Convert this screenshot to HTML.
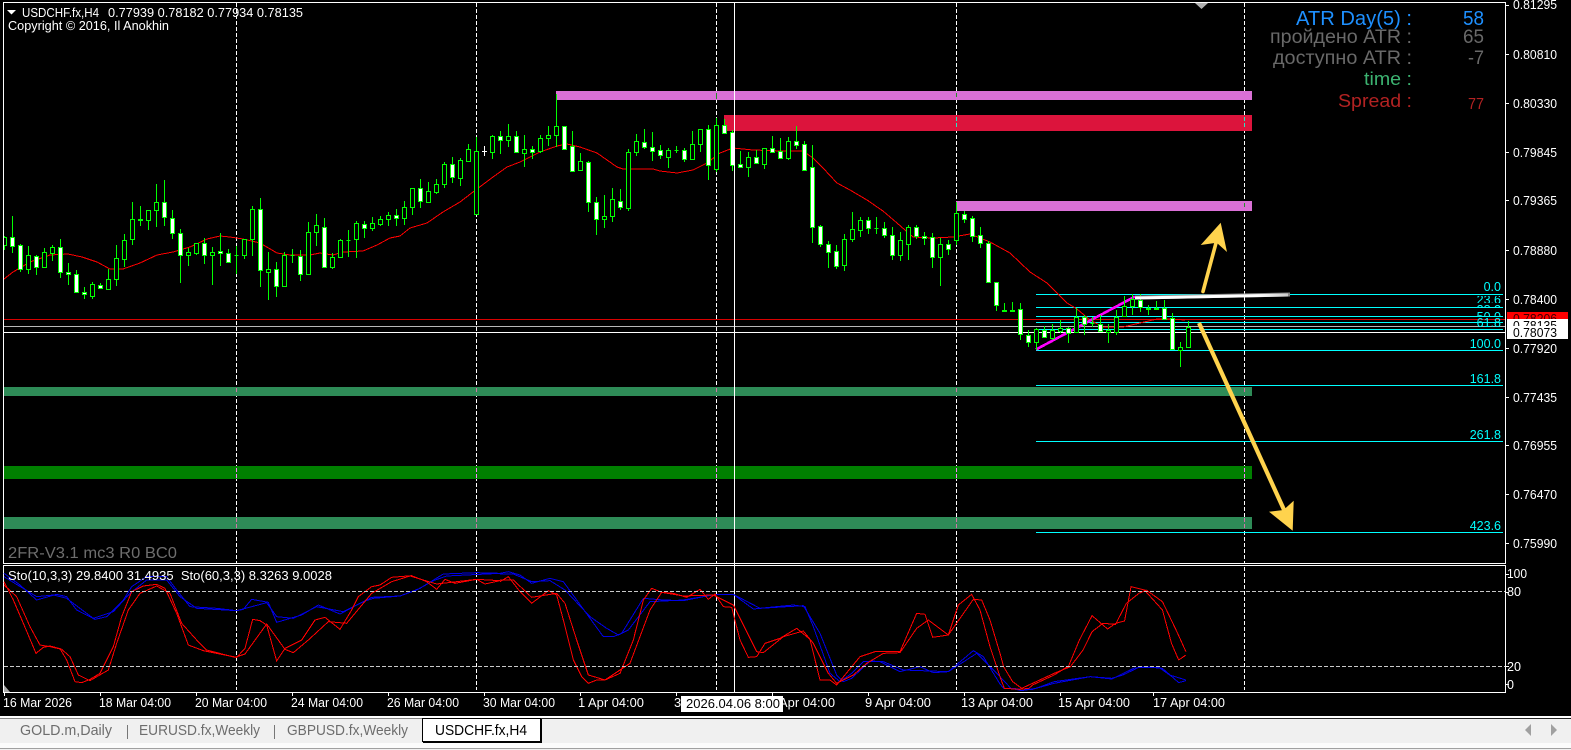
<!DOCTYPE html>
<html><head><meta charset="utf-8"><title>USDCHF.fx,H4</title>
<style>
html,body{margin:0;padding:0;background:#000;width:1571px;height:750px;overflow:hidden}
svg{display:block}
text{font-family:"Liberation Sans",sans-serif;font-size:12.5px;fill:#fff;white-space:pre}
.c{shape-rendering:crispEdges}
.s{fill:none;stroke-width:1;vector-effect:non-scaling-stroke;shape-rendering:crispEdges}
</style></head><body>
<svg width="1571" height="750" viewBox="0 0 1571 750" xmlns="http://www.w3.org/2000/svg">
<defs>
<clipPath id="cl"><rect x="4" y="3" width="1501" height="560"/></clipPath>
<clipPath id="c1"><rect x="1470" y="296" width="35" height="7"/></clipPath>
<clipPath id="c2"><rect x="1470" y="304" width="35" height="4"/></clipPath>
<clipPath id="c3"><rect x="1470" y="311" width="35" height="5"/></clipPath>
<clipPath id="c4"><rect x="1507" y="312" width="61" height="7"/></clipPath>
<clipPath id="c5"><rect x="1507" y="319" width="61" height="7"/></clipPath>
<linearGradient id="wl" x1="0" x2="1" y1="0" y2="0"><stop offset="0" stop-color="#fff"/><stop offset=".8" stop-color="#fff"/><stop offset="1" stop-color="#ccc"/></linearGradient>
</defs>
<rect width="1571" height="750" fill="#000"/>

<!-- grid verticals -->
<g class="c" stroke="#fff" stroke-dasharray="4 2" fill="none">
<path d="M236.5 3V563M476.5 3V563M716.5 3V563M956.5 3V563M1244.5 3V563"/>
<path d="M236.5 567V690M476.5 567V690M716.5 567V690M956.5 567V690M1244.5 567V690"/>
</g>
<!-- rectangles -->
<g class="c">
<rect x="556" y="91" width="696" height="9" fill="#da70d6"/>
<rect x="724" y="115" width="528" height="16" fill="#dc143c"/>
<rect x="956" y="201" width="296" height="10" fill="#da70d6"/>
<rect x="4" y="387" width="1248" height="9" fill="#2e8b57"/>
<rect x="4" y="466" width="1248" height="13" fill="#008000"/>
<rect x="4" y="517" width="1248" height="12" fill="#2e8b57"/>
</g>
<g class="c" fill="none">
<path stroke="#258f29" d="M716.5 93V99M956.5 93V97M1244.5 203V207"/>
<path stroke="#23ebc3" d="M956.5 117V121M956.5 123V127M1244.5 117V121M1244.5 123V127"/>
<path stroke="#d174a8" d="M236.5 388V392M476.5 388V392M716.5 388V392M956.5 388V392M1244.5 388V392M236.5 518V522M476.5 518V522M716.5 518V522M956.5 518V522M1244.5 518V522M236.5 524V528M476.5 524V528M716.5 524V528M956.5 524V528M1244.5 524V528"/>
<path stroke="#ff7fff" d="M236.5 468V472M476.5 468V472M716.5 468V472M956.5 468V472M1244.5 468V472M236.5 474V478M476.5 474V478M716.5 474V478M956.5 474V478M1244.5 474V478"/>
</g>

<!-- horizontal lines -->
<g class="c" fill="none">
<path stroke="#ff0000" d="M4 319.5H1505" stroke-opacity=".85"/>
<path stroke="#b8b8b8" d="M4 326.5H1505"/>
<path stroke="#fff" d="M4 332.5H1505"/>
<path stroke="#00ffff" d="M1036 294.5H1503M1036 307.5H1503M1036 316.5H1503M1036 322.5H1503M1036 329.5H1503M1036 350.5H1503M1036 385.5H1503M1036 441.5H1503M1036 532.5H1503"/>
</g>

<!-- MA -->
<polyline class="s" stroke="#f00" clip-path="url(#cl)" points="4,279 13,272 30,262 50,255 68,254 82,257 97,262 110,269 123,269 140,263 157,255 173,252 190,247 207,239 220,236 230,237 243,239 260,243 277,253 290,255 310,255 320,253 333,255 343,252 363,251 377,245 390,238 400,236 410,228 427,223 443,212 460,202 473,192 493,177 507,167 520,162 540,152 557,146 567,144 580,147 597,153 617,167 623,169 653,169 660,171 677,173 693,170 707,163 720,153 733,148 753,150 783,151 803,151 813,158 823,168 837,183 850,190 867,200 883,211 897,223 913,237 933,238 953,237 970,234 990,242 1010,253 1030,272 1047,283 1067,303 1077,309 1090,320 1103,327 1123,327 1140,323 1157,319 1170,319 1185,320"/>

<!-- magenta trend -->
<path d="M1036 349.5L1135 296.5" stroke="#ff00ff" stroke-width="2.6" fill="none" class="c"/>

<!-- candles -->
<g clip-path="url(#cl)" class="c">
<path stroke="#00ff00" fill="none" d="M4.5 236V250M12.5 216V253M20.5 244V272M28.5 246V274M36.5 255V275M44.5 248V268M52.5 245V261M60.5 239V278M68.5 263V285M76.5 270V293M84.5 287V299M92.5 282V299M100.5 283V289M108.5 269V289M116.5 245V286M124.5 234V267M132.5 202V245M140.5 206V226M148.5 210V230M156.5 184V227M164.5 180V226M172.5 210V239M180.5 229V283M188.5 248V266M196.5 243V255M204.5 238V264M212.5 247V285M220.5 233V266M228.5 249V263M236.5 246V274M244.5 239V259M252.5 206V256M260.5 198V287M268.5 252V300M276.5 262V297M284.5 252V286M292.5 249V263M300.5 250V281M308.5 222V274M316.5 214V246M324.5 218V268M332.5 253V269M340.5 239V258M348.5 230V257M356.5 221V258M364.5 221V238M372.5 217V231M380.5 216V226M388.5 212V226M396.5 209V226M404.5 201V225M412.5 188V215M420.5 179V208M428.5 182V203M436.5 179V194M444.5 162V188M452.5 157V183M460.5 158V186M468.5 144V162M476.5 137V214M492.5 135V159M500.5 131V154M508.5 124V147M516.5 131V152M524.5 135V167M532.5 146V159M540.5 135V153M548.5 126V146M556.5 94V147M564.5 126V149M572.5 131V171M580.5 153V171M588.5 161V212M596.5 197V235M604.5 195V228M612.5 188V222M620.5 189V210M628.5 149V211M636.5 134V156M644.5 129V149M652.5 132V161M660.5 145V159M668.5 148V168M676.5 146V153M684.5 148V162M692.5 131V160M700.5 129V152M708.5 125V180M716.5 118V172M724.5 119V134M732.5 130V171M740.5 151V168M748.5 152V177M756.5 150V164M764.5 148V169M772.5 136V153M780.5 138V158M788.5 137V160M796.5 126V149M804.5 141V170M812.5 145V243M820.5 225V247M828.5 241V268M836.5 245V269M844.5 234V271M852.5 212V242M860.5 217V237M868.5 217V234M876.5 217V234M884.5 222V238M892.5 227V260M900.5 232V261M908.5 225V260M916.5 225V239M924.5 232V245M932.5 233V268M940.5 238V286M948.5 240V255M956.5 202V245M964.5 211V223M972.5 216V242M980.5 227V248M988.5 241V283M996.5 282V311M1004.5 303V311M1012.5 302V312M1020.5 303V340M1028.5 330V347M1036.5 328V350M1044.5 326V337M1052.5 324V340M1060.5 320V333M1068.5 327V343M1076.5 308V333M1084.5 315V335M1092.5 317V327M1100.5 315V331M1108.5 324V343M1116.5 310V335M1124.5 296V317M1132.5 294V315M1140.5 294V312M1148.5 305V315M1156.5 301V309M1164.5 300V319M1172.5 313V350M1180.5 342V367M1188.5 321V348"/>
<path stroke="#00ff00" fill="#000" d="M2.5 237.5h4v8h-4zM26.5 255.5h4v14h-4zM42.5 252.5h4v15h-4zM50.5 247.5h4v6h-4zM90.5 284.5h4v12h-4zM106.5 279.5h4v10h-4zM114.5 258.5h4v21h-4zM122.5 240.5h4v19h-4zM130.5 219.5h4v20h-4zM146.5 210.5h4v10h-4zM154.5 202.5h4v8h-4zM186.5 252.5h4v3h-4zM194.5 243.5h4v10h-4zM210.5 252.5h4v3h-4zM242.5 239.5h4v16h-4zM250.5 209.5h4v30h-4zM266.5 269.5h4v3h-4zM282.5 255.5h4v31h-4zM306.5 232.5h4v42h-4zM314.5 225.5h4v7h-4zM330.5 257.5h4v10h-4zM338.5 240.5h4v17h-4zM354.5 223.5h4v16h-4zM370.5 223.5h4v5h-4zM378.5 219.5h4v5h-4zM386.5 215.5h4v4h-4zM402.5 207.5h4v11h-4zM410.5 188.5h4v19h-4zM426.5 191.5h4v11h-4zM434.5 184.5h4v8h-4zM442.5 164.5h4v20h-4zM458.5 160.5h4v18h-4zM466.5 149.5h4v12h-4zM474.5 151.5h4v63h-4zM490.5 136.5h4v16h-4zM506.5 136.5h4v4h-4zM522.5 149.5h4v4h-4zM538.5 138.5h4v13h-4zM546.5 135.5h4v3h-4zM554.5 126.5h4v9h-4zM578.5 161.5h4v9h-4zM602.5 216.5h4v3h-4zM610.5 199.5h4v17h-4zM626.5 152.5h4v56h-4zM634.5 141.5h4v11h-4zM666.5 150.5h4v7h-4zM690.5 144.5h4v15h-4zM698.5 129.5h4v15h-4zM714.5 125.5h4v44h-4zM746.5 157.5h4v10h-4zM762.5 148.5h4v16h-4zM786.5 141.5h4v17h-4zM842.5 239.5h4v26h-4zM850.5 229.5h4v10h-4zM858.5 220.5h4v10h-4zM898.5 240.5h4v15h-4zM906.5 227.5h4v17h-4zM938.5 244.5h4v13h-4zM954.5 213.5h4v27h-4zM1034.5 329.5h4v13h-4zM1050.5 330.5h4v8h-4zM1058.5 328.5h4v3h-4zM1074.5 317.5h4v15h-4zM1106.5 330.5h4v2h-4zM1114.5 317.5h4v15h-4zM1122.5 306.5h4v10h-4zM1130.5 299.5h4v7h-4zM1178.5 347.5h4v3h-4zM1186.5 327.5h4v20h-4z"/>
<path stroke="#00ff00" fill="#fff" d="M10.5 237.5h4v9h-4zM18.5 245.5h4v24h-4zM34.5 256.5h4v11h-4zM58.5 247.5h4v25h-4zM66.5 272.5h4v2h-4zM74.5 274.5h4v18h-4zM82.5 292.5h4v2h-4zM98.5 285.5h4v3h-4zM162.5 202.5h4v15h-4zM170.5 218.5h4v15h-4zM178.5 233.5h4v22h-4zM202.5 243.5h4v12h-4zM218.5 251.5h4v2h-4zM226.5 253.5h4v9h-4zM258.5 209.5h4v61h-4zM274.5 269.5h4v17h-4zM298.5 256.5h4v18h-4zM322.5 227.5h4v40h-4zM362.5 224.5h4v4h-4zM394.5 215.5h4v3h-4zM418.5 188.5h4v13h-4zM450.5 164.5h4v13h-4zM498.5 136.5h4v4h-4zM514.5 136.5h4v16h-4zM530.5 149.5h4v3h-4zM562.5 126.5h4v23h-4zM570.5 146.5h4v25h-4zM586.5 162.5h4v40h-4zM594.5 202.5h4v17h-4zM618.5 201.5h4v6h-4zM642.5 142.5h4v5h-4zM650.5 147.5h4v4h-4zM658.5 150.5h4v5h-4zM682.5 150.5h4v9h-4zM706.5 129.5h4v36h-4zM722.5 125.5h4v8h-4zM730.5 132.5h4v33h-4zM738.5 164.5h4v3h-4zM754.5 157.5h4v6h-4zM770.5 148.5h4v4h-4zM778.5 151.5h4v7h-4zM794.5 141.5h4v4h-4zM802.5 144.5h4v26h-4zM810.5 167.5h4v60h-4zM818.5 226.5h4v18h-4zM826.5 244.5h4v8h-4zM834.5 251.5h4v15h-4zM866.5 220.5h4v8h-4zM882.5 228.5h4v7h-4zM890.5 235.5h4v20h-4zM914.5 227.5h4v9h-4zM922.5 236.5h4v2h-4zM930.5 237.5h4v20h-4zM946.5 244.5h4v5h-4zM962.5 214.5h4v5h-4zM970.5 218.5h4v18h-4zM978.5 235.5h4v8h-4zM986.5 243.5h4v39h-4zM994.5 282.5h4v23h-4zM1018.5 309.5h4v25h-4zM1026.5 335.5h4v7h-4zM1042.5 330.5h4v7h-4zM1066.5 328.5h4v5h-4zM1082.5 317.5h4v7h-4zM1098.5 324.5h4v7h-4zM1138.5 300.5h4v7h-4zM1162.5 308.5h4v11h-4zM1170.5 318.5h4v31h-4z"/>
<path stroke="#00ff00" fill="none" d="M138.5 219.5h4v1h-4zM234.5 255.5h4M290.5 255.5h4M346.5 240.5h4M674.5 150.5h4M874.5 228.5h4M1002.5 310.5h4v1h-4zM1010.5 310.5h4v1h-4zM1090.5 323.5h4M1146.5 308.5h4v1h-4zM1154.5 308.5h4v1h-4z"/>
<path stroke="#fff" fill="none" d="M484.5 146V156M482 151.5h5"/>
</g>

<!-- crosshair -->
<path class="c" stroke="#fff" d="M734.5 3V692" fill="none"/>

<!-- white trend line -->
<path d="M1135 297.5L1290 294.5" stroke="#8a8a8a" stroke-width="4" fill="none"/>
<path d="M1135 298L1288 295" stroke="url(#wl)" stroke-width="3" fill="none"/>

<!-- arrows -->
<g fill="#ffd34d" stroke="#ffd34d">
<path d="M1203 291.5L1216 243" stroke-width="3.6" fill="none" stroke-linecap="round"/>
<path stroke="none" d="M1220.7 222.7L1200.7 245L1216.7 242.7L1227 252Z"/>
<path d="M1199 323L1285 512" stroke-width="4.2" fill="none"/>
<path stroke="none" d="M1292.7 530.7L1269 511.7L1283.5 510L1293.7 500.7Z"/>
</g>

<!-- frame -->
<g class="c" fill="none" stroke="#fff">
<path d="M3.5 2.5H1505.5V563.5H3.5Z"/>
<path d="M3.5 565.5H1505.5V692.5H3.5Z"/>
</g>
<path d="M1195 3H1208L1201.5 9Z" fill="#b0b0b0"/>
<path d="M4 685V692H10Z" fill="#a8a8a8"/>
<path d="M7 10H16L11.5 14.5Z" fill="#fff"/>

<!-- Stochastics -->
<g>
<g transform="translate(0,560) scale(.33333)">
<polyline class="s" stroke="#0000e6" points="12,40 60,75 110,120 170,103 200,110 230,150 285,178 320,170 370,120 395,80 440,50 500,50 530,90 570,140 650,145 710,152 730,148 755,118 805,127 830,187 905,165 955,135 1020,162 1080,130 1115,112 1200,108 1260,85 1330,42 1430,38 1500,40"/>
<polyline class="s" stroke="#0000e6" points="12,50 110,110 160,105 200,115 280,175 340,155 390,100 440,60 500,60 540,110 590,145 710,152 800,128 830,170 880,175 950,140 1030,155 1090,125 1120,115 1200,108 1250,90 1300,62 1340,48 1500,40"/>
<polyline class="s" stroke="#f00" points="12,65 40,120 70,190 108,280 130,262 150,258 180,266 200,300 225,365 245,368 270,358 300,340 340,260 365,170 395,95 430,78 470,73 495,85 530,160 565,255 610,272 650,280 710,292 735,265 758,178 780,182 800,195 830,303 855,265 905,240 945,180 975,172 1020,208 1055,150 1075,110 1115,80 1140,75 1175,52 1235,47 1280,65 1310,88 1335,58 1365,70 1430,58 1455,72 1500,62"/>
<polyline class="s" stroke="#f00" points="12,75 50,110 90,200 120,255 150,260 185,268 210,290 235,345 270,362 325,330 350,250 385,150 420,100 470,78 510,100 545,190 590,240 620,270 705,292 735,282 800,192 855,268 880,278 925,240 985,185 1040,190 1115,100 1175,65 1230,48 1310,72 1430,58 1500,62"/>
</g>
<g transform="translate(500,560) scale(.33333)">
<polyline class="s" stroke="#0000e6" points="0,40 25,35 60,45 95,70 150,55 190,65 230,120 310,230 340,230 365,220 430,115 490,120 550,122 610,110 650,103 700,103 760,147 880,135 915,140 940,200 990,340 1020,365 1055,340 1090,305 1140,305 1200,335 1260,320 1300,338 1345,335 1420,272 1450,290 1500,372"/>
<polyline class="s" stroke="#0000e6" points="0,42 40,42 95,65 150,62 195,90 270,170 320,205 355,225 385,210 450,125 550,120 650,103 700,103 780,145 910,137 960,220 1010,345 1030,365 1055,355 1110,303 1150,305 1210,330 1345,335 1430,280 1460,310 1500,350"/>
<polyline class="s" stroke="#f00" points="0,65 25,50 60,95 95,130 145,92 170,105 190,180 220,300 245,350 265,370 290,360 315,360 360,340 400,240 430,120 455,85 485,97 520,100 560,112 600,88 625,118 645,102 670,140 695,142 720,240 745,292 770,290 795,250 840,235 890,205 930,238 960,360 990,360 1010,375 1080,290 1125,275 1200,275 1250,160 1275,163 1298,232 1345,225 1375,135 1415,103 1440,150 1470,260 1500,350"/>
<polyline class="s" stroke="#f00" points="0,60 40,60 95,112 170,100 195,130 230,240 265,345 315,360 390,310 450,150 485,97 550,108 640,105 700,135 770,275 790,278 850,230 910,213 940,250 985,340 1010,370 1060,345 1100,310 1150,280 1200,278 1250,205 1285,180 1345,225 1420,118 1445,120 1470,180 1500,280"/>
</g>
<g transform="translate(1000,560) scale(.361,.33333)">
<polyline class="s" stroke="#0000e6" points="0,372 10,385 90,388 150,370 200,360 250,350 310,357 370,325 400,320 450,325 495,368 515,362"/>
<polyline class="s" stroke="#0000e6" points="0,350 30,385 60,392 100,385 150,365 250,350 310,355 340,345 385,322 440,322 470,345 515,360"/>
<polyline class="s" stroke="#f00" points="0,350 12,385 55,388 80,385 90,375 150,345 190,318 220,240 255,167 298,207 320,190 345,183 363,80 400,90 450,150 475,250 495,300 515,285"/>
<polyline class="s" stroke="#f00" points="0,280 10,320 35,365 60,385 100,365 150,340 195,320 230,270 255,215 285,190 320,193 350,130 385,100 405,90 450,125 490,215 515,275"/>
</g>
</g>
<path class="c" fill="none" stroke="#c8c8c8" stroke-dasharray="4 2" d="M4 591.5H1505M4 666.5H1505"/>

<!-- header text -->
<text x="22" y="17" textLength="77" lengthAdjust="spacingAndGlyphs">USDCHF.fx,H4</text>
<text x="108" y="17" textLength="195" lengthAdjust="spacingAndGlyphs">0.77939 0.78182 0.77934 0.78135</text>
<text x="8" y="30" textLength="161" lengthAdjust="spacingAndGlyphs">Copyright © 2016, Il Anokhin</text>
<text x="8" y="558" textLength="169" lengthAdjust="spacingAndGlyphs" style="font-size:16px;fill:#6e6e6e">2FR-V3.1 mc3 R0 BC0</text>
<text x="8" y="580" textLength="324" lengthAdjust="spacingAndGlyphs">Sto(10,3,3) 29.8400 31.4935  Sto(60,3,3) 8.3263 9.0028</text>

<!-- ATR panel -->
<g>
<text x="1296" y="25" textLength="116" lengthAdjust="spacingAndGlyphs" style="font-size:20px;fill:#1e90ff">ATR Day(5) :</text>
<text x="1463" y="25" textLength="21" lengthAdjust="spacingAndGlyphs" style="font-size:20px;fill:#1e90ff">58</text>
<text x="1270" y="43" textLength="142" lengthAdjust="spacingAndGlyphs" style="font-size:19px;fill:#696969">пройдено ATR :</text>
<text x="1463" y="43" textLength="21" lengthAdjust="spacingAndGlyphs" style="font-size:19px;fill:#696969">65</text>
<text x="1273" y="64" textLength="139" lengthAdjust="spacingAndGlyphs" style="font-size:19px;fill:#696969">доступно ATR :</text>
<text x="1468" y="64" textLength="16" lengthAdjust="spacingAndGlyphs" style="font-size:19px;fill:#696969">-7</text>
<text x="1364" y="85" textLength="48" lengthAdjust="spacingAndGlyphs" style="font-size:18px;fill:#3cb371">time :</text>
<text x="1338" y="107" textLength="74" lengthAdjust="spacingAndGlyphs" style="font-size:18px;fill:#b22222">Spread :</text>
<text x="1468" y="109" textLength="16" lengthAdjust="spacingAndGlyphs" style="font-size:16px;fill:#b22222">77</text>
</g>

<!-- fib labels -->
<g text-anchor="end">
<text x="1501" y="291" style="fill:#00ffff">0.0</text>
<text x="1501" y="304" clip-path="url(#c1)" style="fill:#00ffff">23.6</text>
<text x="1501" y="314" clip-path="url(#c2)" style="fill:#00ffff">38.2</text>
<text x="1501" y="321" clip-path="url(#c3)" style="fill:#00ffff">50.0</text>
<text x="1501" y="327" style="fill:#00ffff">61.8</text>
<text x="1501" y="348" style="fill:#00ffff">100.0</text>
<text x="1501" y="383" style="fill:#00ffff">161.8</text>
<text x="1501" y="439" style="fill:#00ffff">261.8</text>
<text x="1501" y="530" style="fill:#00ffff">423.6</text>
</g>

<!-- price axis -->
<path class="c" stroke="#fff" fill="none" d="M1505 5.5h4M1505 54.5h4M1505 103.5h4M1505 152.5h4M1505 200.5h4M1505 250.5h4M1505 299.5h4M1505 348.5h4M1505 397.5h4M1505 445.5h4M1505 494.5h4M1505 543.5h4M1505 574.5h4M1505 592.5h4M1505 666.5h4M1505 684.5h4"/>
<g>
<text x="1513" y="9" textLength="44" lengthAdjust="spacingAndGlyphs">0.81295</text>
<text x="1513" y="59" textLength="44" lengthAdjust="spacingAndGlyphs">0.80810</text>
<text x="1513" y="108" textLength="44" lengthAdjust="spacingAndGlyphs">0.80330</text>
<text x="1513" y="157" textLength="44" lengthAdjust="spacingAndGlyphs">0.79845</text>
<text x="1513" y="205" textLength="44" lengthAdjust="spacingAndGlyphs">0.79365</text>
<text x="1513" y="255" textLength="44" lengthAdjust="spacingAndGlyphs">0.78880</text>
<text x="1513" y="304" textLength="44" lengthAdjust="spacingAndGlyphs">0.78400</text>
<text x="1513" y="353" textLength="44" lengthAdjust="spacingAndGlyphs">0.77920</text>
<text x="1513" y="402" textLength="44" lengthAdjust="spacingAndGlyphs">0.77435</text>
<text x="1513" y="450" textLength="44" lengthAdjust="spacingAndGlyphs">0.76955</text>
<text x="1513" y="499" textLength="44" lengthAdjust="spacingAndGlyphs">0.76470</text>
<text x="1513" y="548" textLength="44" lengthAdjust="spacingAndGlyphs">0.75990</text>
<text x="1507" y="578" textLength="20" lengthAdjust="spacingAndGlyphs">100</text>
<text x="1507" y="596" textLength="14" lengthAdjust="spacingAndGlyphs">80</text>
<text x="1507" y="671" textLength="14" lengthAdjust="spacingAndGlyphs">20</text>
<text x="1507" y="689">0</text>
</g>
<rect x="1507" y="312" width="61" height="7" fill="#ff0000" class="c"/>
<text x="1513" y="323" textLength="44" lengthAdjust="spacingAndGlyphs" clip-path="url(#c4)" style="fill:#3a0000">0.78206</text>
<rect x="1507" y="319" width="61" height="20" fill="#fff" class="c"/>
<text x="1513" y="330" textLength="44" lengthAdjust="spacingAndGlyphs" clip-path="url(#c5)" style="fill:#000">0.78135</text>
<text x="1513" y="337" textLength="44" lengthAdjust="spacingAndGlyphs" style="fill:#000">0.78073</text>

<!-- time axis -->
<path class="c" stroke="#fff" fill="none" d="M4.5 692V696M100.5 692V696M196.5 692V696M292.5 692V696M388.5 692V696M484.5 692V696M580.5 692V696M676.5 692V696M772.5 692V696M868.5 692V696M964.5 692V696M1060.5 692V696M1153.5 692V696"/>
<text x="3" y="707" textLength="69" lengthAdjust="spacingAndGlyphs">16 Mar 2026</text>
<text x="99" y="707" textLength="72" lengthAdjust="spacingAndGlyphs">18 Mar 04:00</text>
<text x="195" y="707" textLength="72" lengthAdjust="spacingAndGlyphs">20 Mar 04:00</text>
<text x="291" y="707" textLength="72" lengthAdjust="spacingAndGlyphs">24 Mar 04:00</text>
<text x="387" y="707" textLength="72" lengthAdjust="spacingAndGlyphs">26 Mar 04:00</text>
<text x="483" y="707" textLength="72" lengthAdjust="spacingAndGlyphs">30 Mar 04:00</text>
<text x="578" y="707" textLength="66" lengthAdjust="spacingAndGlyphs">1 Apr 04:00</text>
<text x="674" y="707" textLength="66" lengthAdjust="spacingAndGlyphs">3 Apr 04:00</text>
<text x="769" y="707" textLength="66" lengthAdjust="spacingAndGlyphs">7 Apr 04:00</text>
<text x="865" y="707" textLength="66" lengthAdjust="spacingAndGlyphs">9 Apr 04:00</text>
<text x="961" y="707" textLength="72" lengthAdjust="spacingAndGlyphs">13 Apr 04:00</text>
<text x="1058" y="707" textLength="72" lengthAdjust="spacingAndGlyphs">15 Apr 04:00</text>
<text x="1153" y="707" textLength="72" lengthAdjust="spacingAndGlyphs">17 Apr 04:00</text>
<rect x="681" y="696" width="102" height="16" fill="#fff" class="c"/>
<text x="686" y="708" textLength="94" lengthAdjust="spacingAndGlyphs" style="fill:#000">2026.04.06 8:00</text>

<!-- tab bar -->
<g class="c">
<rect x="0" y="716" width="1571" height="34" fill="#f0f0f0"/>
<rect x="0" y="716" width="1571" height="2" fill="#fff"/>
<rect x="0" y="718" width="422" height="1" fill="#888"/>
<rect x="541" y="718" width="1030" height="1" fill="#222"/>
<rect x="0" y="743" width="1571" height="5" fill="#fbfbfb"/>
<rect x="0" y="748" width="1571" height="1" fill="#a0a0a0"/>
<rect x="127" y="725" width="1" height="14" fill="#777"/>
<rect x="274" y="725" width="1" height="14" fill="#777"/>
<rect x="422" y="718" width="119" height="24" fill="#fff"/>
<path d="M422.5 742V718.5H540.5V742M422 741.5H542" stroke="#000" fill="none"/>
<path d="M541.5 719V743M423 742.5H542" stroke="#000" fill="none"/>
</g>
<text x="20" y="735" textLength="92" lengthAdjust="spacingAndGlyphs" style="font-size:15px;fill:#6d6d6d">GOLD.m,Daily</text>
<text x="139" y="735" textLength="121" lengthAdjust="spacingAndGlyphs" style="font-size:15px;fill:#6d6d6d">EURUSD.fx,Weekly</text>
<text x="287" y="735" textLength="121" lengthAdjust="spacingAndGlyphs" style="font-size:15px;fill:#6d6d6d">GBPUSD.fx,Weekly</text>
<text x="435" y="735" textLength="92" lengthAdjust="spacingAndGlyphs" style="font-size:15px;fill:#000">USDCHF.fx,H4</text>
<path d="M1531 724V736L1525 730Z" fill="#a0a0a0"/>
<path d="M1551 724V736L1557 730Z" fill="#a0a0a0"/>
</svg>
</body></html>
